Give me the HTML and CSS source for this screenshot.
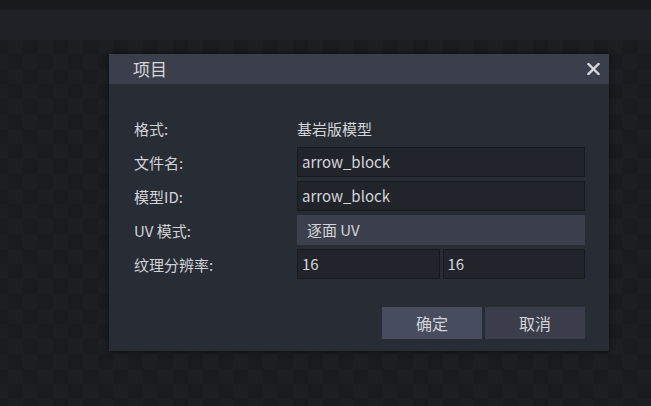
FILE: index.html
```html
<!DOCTYPE html>
<html lang="zh">
<head>
<meta charset="utf-8">
<link rel="stylesheet" href="styles.css">
</head>
<body>
<div class="topstrip"></div>
<div class="toolbar"></div>
<div class="workspace">
  <div class="dialog">
    <div class="titlebar">
      <span class="title">项目</span>
      <svg class="close" width="13" height="12" viewBox="0 0 13 12"><path d="M1.5 1 L11.5 11 M11.5 1 L1.5 11" stroke="#d6d7db" stroke-width="2.4" stroke-linecap="square" fill="none"/></svg>
    </div>
    <div class="content">
      <div class="form">
        <div class="row"><div class="label">格式:</div><div class="value">基岩版模型</div></div>
        <div class="row"><div class="label">文件名:</div><div class="input">arrow_block</div></div>
        <div class="row"><div class="label">模型ID:</div><div class="input">arrow_block</div></div>
        <div class="row"><div class="label">UV 模式:</div><div class="select">逐面 UV</div></div>
        <div class="row"><div class="label">纹理分辨率:</div><div class="pair"><div class="input">16</div><div class="input">16</div></div></div>
      </div>
      <div class="buttons">
        <div class="btn primary">确定</div>
        <div class="btn">取消</div>
      </div>
    </div>
  </div>
</div>
</body>
</html>
```
FILE: styles.css
```css
html, body {
  margin: 0;
  padding: 0;
  height: 100%;
  overflow: hidden;
}
body {
  font-family: "Noto Sans CJK SC", "Noto Sans", sans-serif;
  color: #d3d4d8;
  background: #1b1c20;
  display: flex;
  flex-direction: column;
}
.topstrip {
  height: 10px;
  background: #191a1e;
}
.toolbar {
  height: 30px;
  background: #1f2126;
}
.workspace {
  flex: 1;
  background-color: #1a1b1f;
  background-image: conic-gradient(#1d1e22 0 25%, transparent 0 50%, #1d1e22 0 75%, transparent 0);
  background-size: 30px 30px;
  background-position: -7px -1px;
  padding-top: 14px;
  padding-left: 109px;
}
.dialog {
  width: 500px;
  background: #282c35;
  box-shadow: 0 0 5px rgba(0, 0, 0, 0.55);
}
.titlebar {
  height: 30px;
  background: #3b3f4b;
  display: flex;
  align-items: center;
  justify-content: space-between;
  padding: 0 9px 0 24px;
}
.title {
  font-size: 17px;
  color: #d6d7db;
  line-height: 30px;
}
.close {
  display: block;
  margin-top: 0;
}
.content {
  padding: 29px 24px 12px 25px;
}
.form {
  display: flex;
  flex-direction: column;
  gap: 4px;
}
.row {
  display: flex;
  align-items: center;
  height: 30px;
}
.label {
  width: 163px;
  font-size: 15px;
  flex: none;
}
.value {
  font-size: 15px;
}
.input {
  flex: 1;
  box-sizing: border-box;
  height: 30px;
  background: #21242b;
  border: 1px solid #17191d;
  font-size: 15px;
  line-height: 28px;
  padding-left: 4px;
}
.select {
  flex: 1;
  box-sizing: border-box;
  height: 30px;
  background: #3c404c;
  font-size: 15px;
  line-height: 30px;
  padding-left: 10px;
}
.pair {
  flex: 1;
  display: grid;
  grid-template-columns: 1fr 1fr;
  gap: 3px;
}
.buttons {
  display: flex;
  justify-content: flex-end;
  gap: 3px;
  margin-top: 28px;
}
.btn {
  width: 100px;
  height: 32px;
  line-height: 32px;
  text-align: center;
  font-size: 16px;
  background: #3b3e4a;
}
.btn.primary {
  background: #474c5e;
}
```
